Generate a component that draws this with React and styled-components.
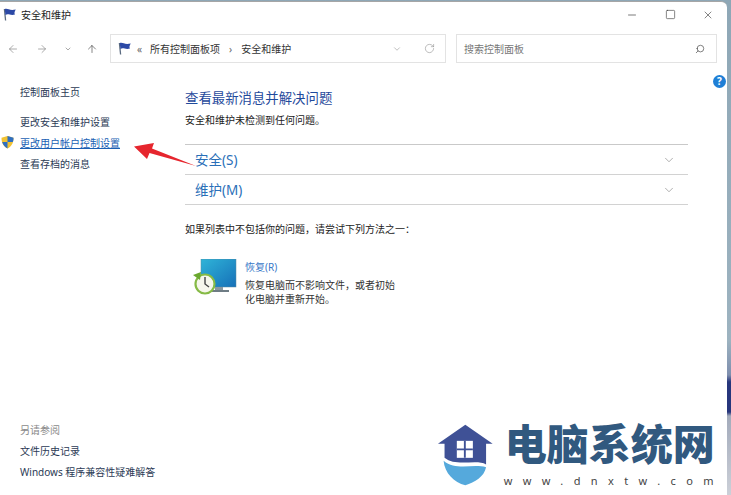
import React from "react";
import styled, { createGlobalStyle } from "styled-components";
import { ArrowLeft, ArrowRight, ArrowUp, ChevronDown, RotateCw, Search, Minus, Square, X } from "lucide-react";

const Global = createGlobalStyle`
  html, body { margin: 0; padding: 0; background: #fff; }
  body { font-family: "Noto Sans", "Noto Sans CJK SC", sans-serif; }
`;
const Desktop = styled.div`
  position: relative; width: 731px; height: 495px; overflow: hidden;
  background: linear-gradient(#8ea7b6 0, #9db3c0 340px, #7f8fae 375px, #27367c 382px, #27367c 412px, #a3abbb 416px, #ccd0d8 100%);
  padding-top: 1px; box-sizing: border-box;
`;
const Window = styled.div`
  width: 727px; height: 494px; background: #fff; border-top: 1px solid #a6a6a6;
  border-top-right-radius: 6px; box-sizing: border-box;
  display: flex; flex-direction: column;
`;
const TitleBar = styled.div`
  height: 25px; flex: none; display: flex; align-items: center; padding-left: 3px;
`;
const TitleText = styled.span`
  font-size: 10px; color: #222; margin-left: 5px; flex: 1;
`;
const WinControls = styled.div`
  display: flex; align-items: center; gap: 26px; padding-right: 13px; color: #333;
`;
const Control = styled.span`
  width: 12px; height: 12px; display: flex; align-items: center; justify-content: center;
`;
const NavRow = styled.div`
  height: 29px; flex: none; margin-top: 7px; display: flex; align-items: center; padding-right: 10px;
`;
const NavButtons = styled.div`
  width: 110px; flex: none; display: flex; align-items: center; padding-left: 7px; box-sizing: border-box;
`;
const NavSlot = styled.span`
  width: ${p => p.$w}px; display: flex; color: ${p => p.$c || "#7e7e7e"};
`;
const FieldBox = styled.div`
  height: 29px; box-sizing: border-box; border: 1px solid #e3e3e3; display: flex; align-items: center;
  width: ${p => p.$w}px; flex: none; font-size: 10px; color: #333;
`;
const Crumb = styled.span`
  display: flex; align-items: center; color: ${p => p.$c || "#333"}; margin: ${p => p.$m || "0"};
`;
const Spacer = styled.span`flex: 1;`;
const SearchHint = styled.span`
  color: #777; flex: 1; padding-left: 7px;
`;
const Body = styled.div`
  flex: 1; display: flex; min-height: 0;
`;
const Sidebar = styled.aside`
  width: 185px; flex: none; padding: 19px 0 12px 20px; box-sizing: border-box;
  display: flex; flex-direction: column; font-size: 10px;
`;
const SideLink = styled.a`
  display: block; height: 21px; line-height: 21px; color: ${p => p.$c || "#2b3a55"};
  text-decoration: ${p => p.$u ? "underline" : "none"}; position: relative; white-space: nowrap;
  margin-top: ${p => p.$mt || 0}px;
`;
const ShieldSlot = styled.span`
  position: absolute; left: -19px; top: 2px; width: 13px; height: 14px;
`;
const Main = styled.main`
  flex: 1; padding-top: 26px; display: flex; flex-direction: column; min-width: 0;
`;
const Heading = styled.h1`
  margin: 0; font-weight: 400; font-size: 13.4px; line-height: 18px; color: #1f4a9c;
`;
const Sub = styled.p`
  margin: 6px 0 0; font-size: 10px; line-height: 14px; color: #222;
`;
const Accordion = styled.div`
  margin-top: 17px; width: 503px; border-top: 1px solid #c9c9c9;
`;
const AccRow = styled.div`
  height: 29px; border-bottom: 1px solid #d2d2d2; display: flex; align-items: center; justify-content: space-between;
  padding: 0 12px 0 10px; font-size: 13.5px; color: #2a6fb8; box-sizing: content-box;
`;
const AccLabel = styled.span`
  margin-top: -1px;
`;
const Hint = styled.p`
  margin: 17px 0 0; font-size: 10px; line-height: 14px; color: #222;
`;
const Recovery = styled.div`
  display: flex; margin: 23px 0 0 8px;
`;
const RecoveryIcon = styled.div`
  width: 52px; flex: none;
`;
const RecoveryText = styled.div`
  font-size: 10px; line-height: 14px; color: #333; width: 152px; padding-top: 1px;
`;
const RecoveryLink = styled.a`
  display: block; color: #3a78c8; margin-bottom: 4px;
`;
const HelpBadge = styled.span`
  position: absolute; left: 713px; top: 75px; width: 13px; height: 13px; border-radius: 50%;
  background: #1f7fd6; color: #fff; font-size: 10px; font-weight: 700; line-height: 13px; text-align: center;
`;
const Annotation = styled.svg`
  position: absolute; left: 130px; top: 139px;
`;
const Watermark = styled.div`
  position: absolute; left: 437px; top: 421px; width: 287px; height: 70px; display: flex;
`;
const LogoText = styled.div`
  margin-left: 11px; margin-top: 2px;
`;
const LogoName = styled.div`
  font-family: "Liberation Serif", "Noto Sans CJK SC", serif; font-weight: 900; font-size: 42px; line-height: 46px;
  color: #31597f; white-space: nowrap;
`;
const LogoUrl = styled.div`
  font-size: 11px; color: #444; letter-spacing: 10.4px; line-height: 14px; white-space: nowrap; margin-top: 5px; margin-left: -1px;
`;

const Flag = () => (
  <svg width="13" height="13" viewBox="0 0 13 13">
    <path d="M1.4 1 L2.6 12.5" stroke="#5a6a80" strokeWidth="1.3" />
    <path d="M1.8 1C5 0 6.5 3 12.8 1.4 11.5 3.5 11 5 12 6.6 7 8 5.5 5 2.4 7Z" fill="#2c49a6" />
  </svg>
);
const Shield = () => (
  <svg width="13" height="14" viewBox="0 0 13 14">
    <path d="M6.5 1 L12.5 2.8C12.6 8 10.5 11.5 6.5 13.5 2.5 11.5.4 8 .5 2.8Z" fill="#f1c232" />
    <path d="M6.5 1 L12.5 2.8C12.6 5 12.2 6 11.8 7H6.5Z" fill="#2f6fc0" />
    <path d="M6.5 7H1.2C2 10 3.8 12 6.5 13.5Z" fill="#2f6fc0" />
  </svg>
);
const RecoverGlyph = () => (
  <svg width="44" height="38" viewBox="0 0 44 38">
    <defs>
      <linearGradient id="scr" x1="0" y1="0" x2="1" y2="1">
        <stop offset="0" stopColor="#2fb4d8" />
        <stop offset="1" stopColor="#1670b8" />
      </linearGradient>
    </defs>
    <rect x="8" y="0" width="35" height="28" fill="url(#scr)" stroke="#5a8aa0" strokeWidth=".5" />
    <rect x="22" y="28" width="8" height="3" fill="#8a98a0" />
    <rect x="16" y="31" width="20" height="2" fill="#6e7c84" />
    <circle cx="12" cy="25" r="9.5" fill="#f6f6ec" stroke="#86ba46" strokeWidth="2.2" />
    <path d="M12 18 V25 L16 28" fill="none" stroke="#444" strokeWidth="1.4" />
    <path d="M0 16 L8 13 L7 21Z" fill="#6aa82e" />
  </svg>
);
const House = () => (
  <svg width="61" height="68" viewBox="0 0 60 66">
    <path d="M30 1 L59 21 H52 V43 C42 37 20 46 8 36 V21 H1Z" fill="#3f5196" />
    <rect x="21" y="18" width="17" height="18" fill="#fff" />
    <path d="M29.5 18V36M21 27H38" stroke="#3f5196" strokeWidth="2" />
    <path d="M7 39C20 50 38 42 52 46 C50 56 40 62 30 65 C18 62 8 52 7 39Z" fill="#55a9dc" />
  </svg>
);

export default function App() {
  return (
    <Desktop>
      <Global />
      <Window>
        <TitleBar>
          <Flag />
          <TitleText>安全和维护</TitleText>
          <WinControls>
            <Control><Minus size={12} strokeWidth={1.3} /></Control>
            <Control><Square size={11} strokeWidth={1.3} /></Control>
            <Control><X size={14} strokeWidth={1.2} /></Control>
          </WinControls>
        </TitleBar>
        <NavRow>
          <NavButtons>
            <NavSlot $w={29}><ArrowLeft size={12} strokeWidth={1.3} /></NavSlot>
            <NavSlot $w={28}><ArrowRight size={12} strokeWidth={1.3} /></NavSlot>
            <NavSlot $w={22}><ChevronDown size={8} strokeWidth={2} /></NavSlot>
            <NavSlot $w={20} $c="#444"><ArrowUp size={12} strokeWidth={1.3} /></NavSlot>
          </NavButtons>
          <FieldBox $w={336}>
            <Crumb $m="0 0 0 7px"><Flag /></Crumb>
            <Crumb $c="#666" $m="0 8px 0 6px">«</Crumb>
            <Crumb>所有控制面板项</Crumb>
            <Crumb $c="#666" $m="0 9px 0 9px">›</Crumb>
            <Crumb>安全和维护</Crumb>
            <Spacer />
            <Crumb $c="#888" $m="0 22px 0 0"><ChevronDown size={10} strokeWidth={1.3} /></Crumb>
            <Crumb $c="#888" $m="0 10px 0 0"><RotateCw size={11} strokeWidth={1.2} /></Crumb>
          </FieldBox>
          <Spacer />
          <FieldBox $w={261}>
            <SearchHint>搜索控制面板</SearchHint>
            <Crumb $c="#444" $m="0 11px 0 0"><Search size={10} strokeWidth={1.6} style={{ transform: "scaleX(-1)" }} /></Crumb>
          </FieldBox>
        </NavRow>
        <Body>
          <Sidebar>
            <SideLink>控制面板主页</SideLink>
            <SideLink $mt={9}>更改安全和维护设置</SideLink>
            <SideLink $c="#1a5fb4" $u><ShieldSlot><Shield /></ShieldSlot>更改用户帐户控制设置</SideLink>
            <SideLink>查看存档的消息</SideLink>
            <Spacer />
            <SideLink $c="#8a8a8a">另请参阅</SideLink>
            <SideLink>文件历史记录</SideLink>
            <SideLink>Windows 程序兼容性疑难解答</SideLink>
          </Sidebar>
          <Main>
            <Heading>查看最新消息并解决问题</Heading>
            <Sub>安全和维护未检测到任何问题。</Sub>
            <Accordion>
              <AccRow><AccLabel>安全(S)</AccLabel><ChevronDown size={14} strokeWidth={1} color="#777" /></AccRow>
              <AccRow><AccLabel>维护(M)</AccLabel><ChevronDown size={14} strokeWidth={1} color="#777" /></AccRow>
            </Accordion>
            <Hint>如果列表中不包括你的问题，请尝试下列方法之一：</Hint>
            <Recovery>
              <RecoveryIcon><RecoverGlyph /></RecoveryIcon>
              <RecoveryText>
                <RecoveryLink>恢复(R)</RecoveryLink>
                恢复电脑而不影响文件，或者初始化电脑并重新开始。
              </RecoveryText>
            </Recovery>
          </Main>
        </Body>
      </Window>
      <HelpBadge>?</HelpBadge>
      <Annotation width="70" height="35" viewBox="0 0 70 35">
        <path d="M66 27 L22 9.5 L24 4 L4 7.5 L17 20 L19.5 14Z" fill="#e6262e" />
      </Annotation>
      <Watermark>
        <House />
        <LogoText>
          <LogoName>电脑系统网</LogoName>
          <LogoUrl>www.dnxtw.com</LogoUrl>
        </LogoText>
      </Watermark>
    </Desktop>
  );
}
